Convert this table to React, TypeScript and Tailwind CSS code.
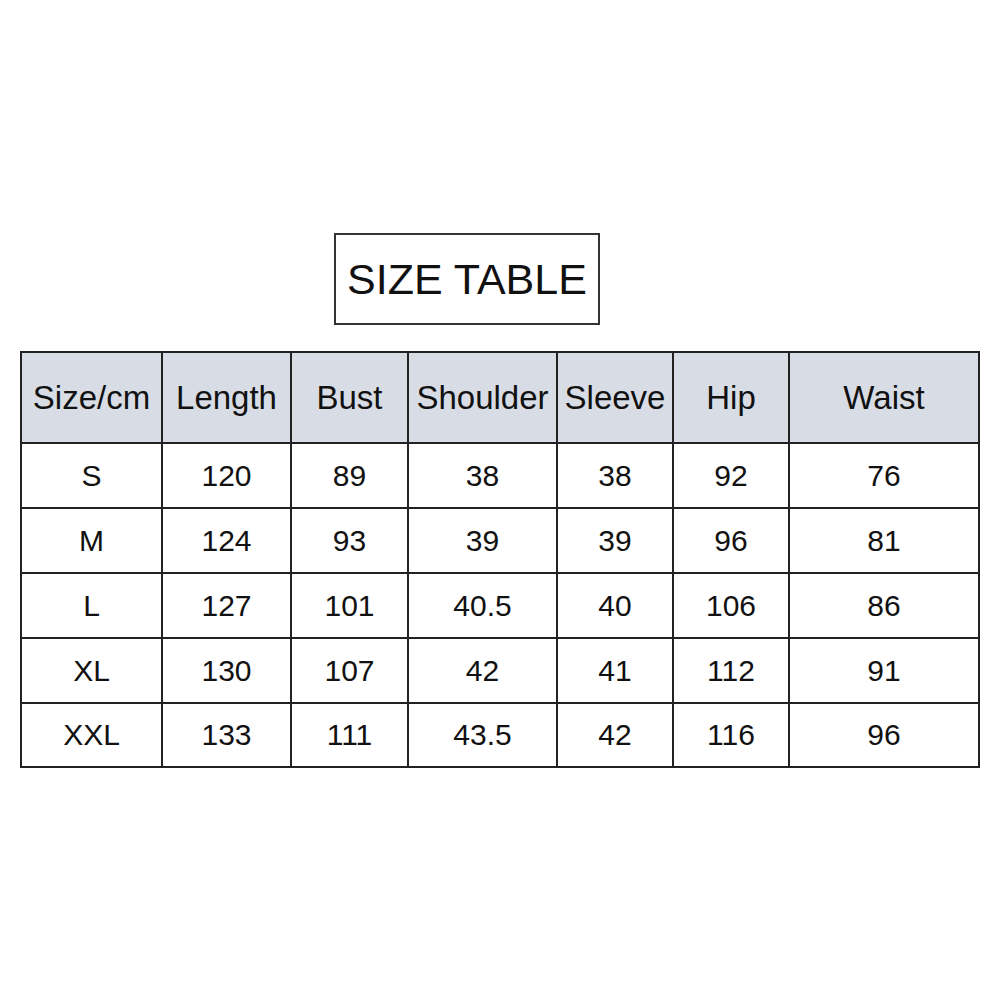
const headers = ['Size/cm', 'Length', 'Bust', 'Shoulder', 'Sleeve', 'Hip', 'Waist'];
const widths = ['w-[141px]', 'w-[129px]', 'w-[117px]', 'w-[149px]', 'w-[116px]', 'w-[116px]', 'w-[190px]'];

const rows = [
  ['S', '120', '89', '38', '38', '92', '76'],
  ['M', '124', '93', '39', '39', '96', '81'],
  ['L', '127', '101', '40.5', '40', '106', '86'],
  ['XL', '130', '107', '42', '41', '112', '91'],
  ['XXL', '133', '111', '43.5', '42', '116', '96'],
];

export default function App() {
  return (
    <div className="w-[1001px] h-[1001px] bg-white text-[#111] font-['Liberation_Sans',Arial,sans-serif]">
      <div className="pt-[233px] pl-[334px]">
        <div className="w-[266px] h-[92px] border-2 border-[#333] flex items-center justify-center text-[43px] leading-none">
          SIZE TABLE
        </div>
      </div>

      <div className="pl-[20px] pt-[26px]">
        <table className="border-collapse table-fixed w-[959px]">
          <thead>
            <tr className="h-[91px] bg-[#d8dde5]">
              {headers.map((h, i) => (
                <th
                  key={h}
                  className={`${widths[i]} border-2 border-[#222] p-0 text-[33px] font-normal text-center leading-none whitespace-nowrap`}
                >
                  {h}
                </th>
              ))}
            </tr>
          </thead>
          <tbody>
            {rows.map((row, r) => (
              <tr key={row[0]} className={r === rows.length - 1 ? 'h-[64px]' : 'h-[65px]'}>
                {row.map((cell, i) => (
                  <td key={i} className="border-2 border-[#222] p-0 text-[30px] text-center leading-none">
                    {cell}
                  </td>
                ))}
              </tr>
            ))}
          </tbody>
        </table>
      </div>
    </div>
  );
}
